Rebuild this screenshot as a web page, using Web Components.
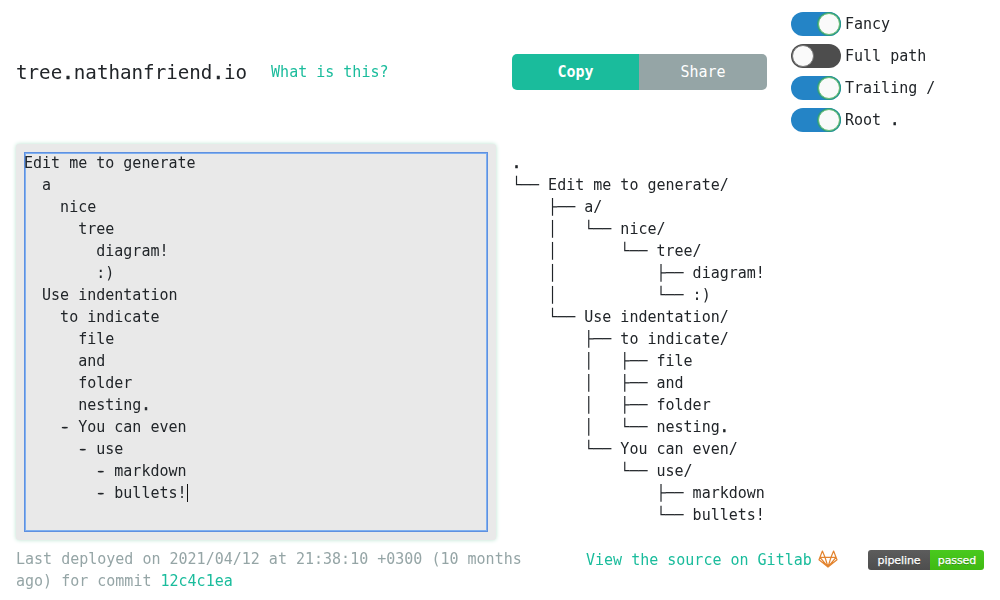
<!DOCTYPE html>
<html lang="en">
<head>
<meta charset="utf-8">
<title>tree.nathanfriend.io</title>
<style>body{margin:0;background:#fff}</style>
</head>
<body>
<tree-app></tree-app>
<script>
function define(name, html) {
  customElements.define(name, class extends HTMLElement {
    constructor() {
      super();
      const t = document.createElement('template');
      t.innerHTML = html;
      this.attachShadow({mode: 'open'}).append(t.content.cloneNode(true));
    }
  });
}

// One block per line; bullets and full stops get their own weight.
const lines = text => text.split('\n').map(l => '<div>' + l
  .replace(/^( *)- /, '$1<span class="b">-</span> ')
  .replace(/\.$/, '<span class="d">.</span>') + '</div>').join('');

define('text-link', `<style>:host{display:inline;color:#1abc9c}</style><slot></slot>`);

define('action-buttons', `<style>
:host{display:grid;grid-template-columns:127px 128px;height:36px;border-radius:5px;overflow:hidden;color:#fff;text-align:center;line-height:36px}
.copy{background:#1abc9c;font-weight:bold}.share{background:#95a5a6}
</style><div class="copy">Copy</div><div class="share">Share</div>`);

define('toggle-switch', `<style>
:host{display:flex;align-items:center;height:24px;gap:4px;line-height:24px}
.track{box-sizing:border-box;width:50px;height:24px;border-radius:12px;background:#4d4d4d;padding:1px;display:flex;align-items:center}
.knob{box-sizing:border-box;width:22px;height:22px;border-radius:50%;background:#fafafa;border:1px solid #777}
:host([on]) .track{background:#2484c6;justify-content:flex-end}
:host([on]) .knob{border-color:#68bd72;box-shadow:0 0 0 1px #2a9a86}
</style><div class="track"><div class="knob"></div></div><span><slot></slot></span>`);

define('tree-input', `<style>
:host{display:block;box-sizing:border-box;height:396px;padding:8px;background:#e9e9e9;border-radius:3px;box-shadow:0 0 4px #b9e2ce}
.field{box-sizing:border-box;height:380px;border:1px solid #5f90e0;box-shadow:inset 0 0 0 1px #7fb0f0;overflow:hidden}
.text{margin:-1px;white-space:pre}
.caret{display:inline-block;width:1px;height:18px;background:#111;vertical-align:-4px}
.b{text-shadow:1px 0,-1px 0}
.d{-webkit-text-stroke:.6px}
</style><div class="field"><div class="text">${lines(`Edit me to generate
  a
    nice
      tree
        diagram!
        :)
  Use indentation
    to indicate
      file
      and
      folder
      nesting.
    - You can even
      - use
        - markdown
        - bullets!<span class="caret"></span>`)}</div></div>`);

define('tree-output', `<style>:host{display:block;white-space:pre}.d{-webkit-text-stroke:.6px}</style>${lines(`.
└── Edit me to generate/
    ├── a/
    │   └── nice/
    │       └── tree/
    │           ├── diagram!
    │           └── :)
    └── Use indentation/
        ├── to indicate/
        │   ├── file
        │   ├── and
        │   ├── folder
        │   └── nesting.
        └── You can even/
            └── use/
                ├── markdown
                └── bullets!`)}`);

define('gitlab-icon', `<style>:host{display:block;width:20px;height:18px}svg{display:block}</style>
<svg width="20" height="18" viewBox="0 0 20 18" fill="none" stroke="#e3842f" stroke-width="1.2" stroke-linejoin="round"><path d="M4.4 1 1 9.8 10 17 19 9.8 15.6 1 13 7.3H7ZM2 7.3H7L10 17 13 7.3H18M2 7.3 10 17 18 7.3"/></svg>`);

define('status-badge', `<style>
:host{display:grid;grid-template-columns:62px 54px;height:20px;border-radius:3px;overflow:hidden;color:#fff;text-align:center;font:11px/21px "DejaVu Sans",sans-serif;letter-spacing:-.1px;-webkit-text-stroke:.25px #fff;text-shadow:0 1px 0 rgba(1,1,1,.3)}
.k{background:linear-gradient(#5c5c5c,#4d4d4d)}.v{background:linear-gradient(#49c91e,#3fb912)}
</style><div class="k">pipeline</div><div class="v">passed</div>`);

define('page-footer', `<style>
:host{display:flex;align-items:flex-start;padding:0 16px;color:#95a5a6;height:52px}
.deploy{width:520px;margin-right:50px}
.source{display:flex;gap:6px;padding-top:1px}
gitlab-icon{margin-top:1px}
status-badge{margin:2px 0 0 auto}
</style><div class="deploy">Last deployed on 2021/04/12 at 21:38:10 +0300 (10 months ago) for commit <text-link>12c4c1ea</text-link></div>
<div class="source"><text-link>View the source on Gitlab</text-link><gitlab-icon></gitlab-icon></div><status-badge></status-badge>`);

define('page-header', `<style>
:host{display:grid;grid-template-columns:480px 255px 1fr;column-gap:16px;padding:0 16px;height:144px;align-items:center}
.brand{display:flex;align-items:center;gap:24px}
h1{margin:0;padding-top:2px;font-size:19.2px;font-weight:400;line-height:24px}
.options{display:grid;gap:8px;margin-left:8px}
.d{-webkit-text-stroke:.6px}
</style><div class="brand"><h1>tree<span class="d">.</span>nathanfriend<span class="d">.</span>io</h1><text-link>What is this?</text-link></div>
<action-buttons></action-buttons>
<div class="options"><toggle-switch on>Fancy</toggle-switch><toggle-switch>Full path</toggle-switch><toggle-switch on>Trailing /</toggle-switch><toggle-switch on>Root <span class="d">.</span></toggle-switch></div>`);

define('tree-app', `<style>
:host{display:block;height:600px;overflow:hidden;color:#212529;font:15px/22px "DejaVu Sans Mono",monospace;opacity:.999}
main{display:grid;grid-template-columns:480px 1fr;gap:16px;padding:0 16px;height:404px}
tree-output{padding-top:8px}
</style><page-header></page-header><main><tree-input></tree-input><tree-output></tree-output></main><page-footer></page-footer>`);
</script>
</body>
</html>
